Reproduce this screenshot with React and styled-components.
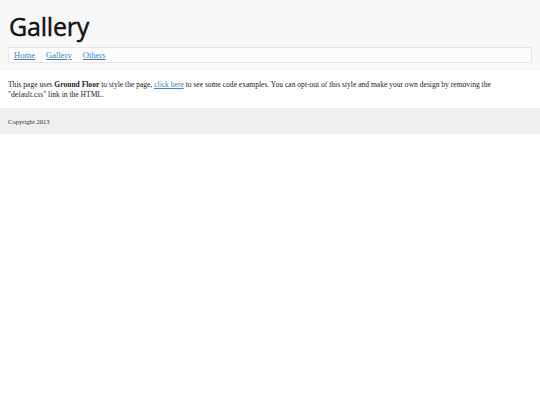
import React from "react";
import styled, { createGlobalStyle } from "styled-components";

const Global = createGlobalStyle`
  html, body { margin: 0; padding: 0; background: #fff; }
  body { font-family: "Liberation Serif", Georgia, serif; color: #222; }
`;

const Header = styled.header`
  background: #f8f8f8;
  padding: 9px 8px 8px;
  height: 71px;
  box-sizing: border-box;
`;

const Title = styled.h1`
  margin: 0 0 0 1px;
  font-family: "Open Sans", sans-serif;
  font-weight: 400;
  font-size: 25px;
  letter-spacing: -0.2px;
  -webkit-text-stroke: 0.45px #111;
  line-height: 34px;
  color: #111;
`;

const Nav = styled.nav`
  margin-top: 4px;
  height: 16px;
  box-sizing: border-box;
  border: 1px solid #e6e6e6;
  background: #fcfcfc;
  display: flex;
  align-items: center;
  gap: 11px;
  padding: 0 0 0 5px;
`;

const NavLink = styled.a`
  font-family: "Liberation Serif", serif;
  font-size: 8.6px;
  color: #3f86c0;
  text-decoration: underline;
`;

const Main = styled.main`
  padding: 9px 8px 8px;
  font-size: 7.55px;
  line-height: 10px;
  color: #222;
`;

const Para = styled.p`
  margin: 0;
  width: 500px;
`;

const InlineLink = styled.a`
  color: #3f86c0;
  text-decoration: underline;
`;

const Footer = styled.footer`
  background: #eeeeee;
  height: 26px;
  padding: 0 8px;
  display: flex;
  align-items: center;
  font-size: 6.6px;
  color: #333;
`;

export default function App() {
  return (
    <>
      <Global />
      <Header>
        <Title>Gallery</Title>
        <Nav>
          <NavLink href="#">Home</NavLink>
          <NavLink href="#">Gallery</NavLink>
          <NavLink href="#">Others</NavLink>
        </Nav>
      </Header>
      <Main>
        <Para>
          This page uses <b>Ground Floor</b> to style the page,{" "}
          <InlineLink href="#">click here</InlineLink> to see some code examples. You can
          opt-out of this style and make your own design by removing the "default.css" link
          in the HTML.
        </Para>
      </Main>
      <Footer>Copyright 2013</Footer>
    </>
  );
}
